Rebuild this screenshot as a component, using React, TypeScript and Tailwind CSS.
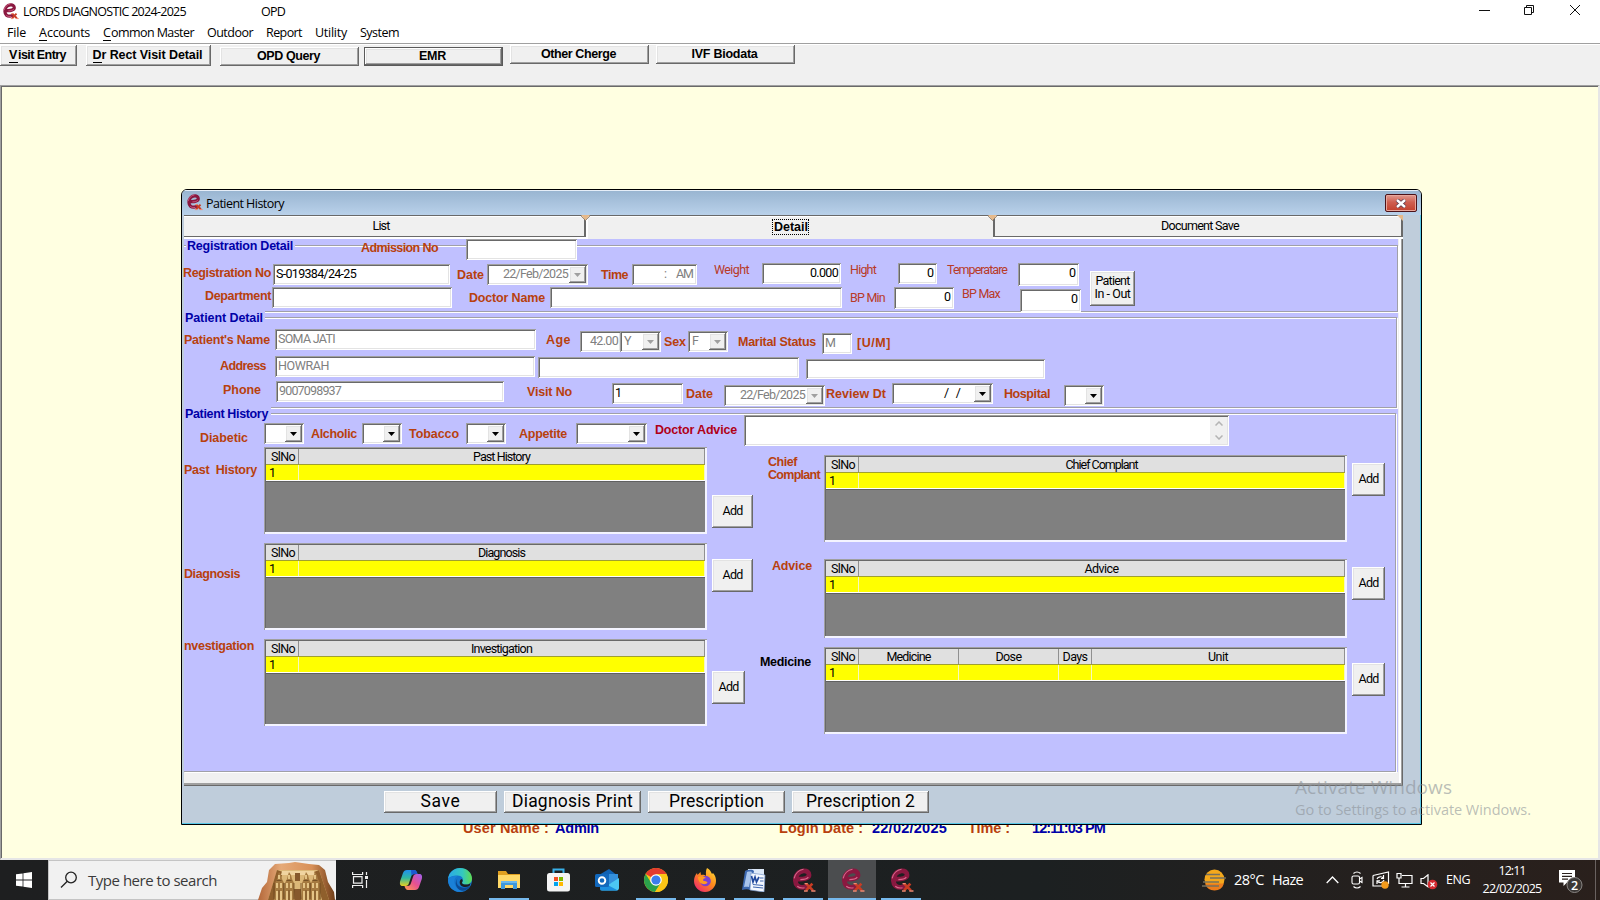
import { useLayoutEffect, useRef, useState, type ReactNode } from "react";
import clsx from "clsx";

const SUNKEN =
  "bg-white shadow-[inset_1px_1px_0_#a0a0a0,inset_-1px_-1px_0_#ffffff,inset_2px_2px_0_#696969,inset_-2px_-2px_0_#e3e3e3]";
const RAISED =
  "bg-[#f0f0f0] shadow-[inset_-1px_-1px_0_#696969,inset_1px_1px_0_#ffffff,inset_-2px_-2px_0_#a0a0a0,inset_2px_2px_0_#e3e3e3]";
const SANS = "font-['Liberation_Sans',Arial,sans-serif]";
const NARROW = "font-['Roboto','Liberation_Sans',sans-serif]";
const SEGOE = "font-['Open_Sans','Noto_Sans',sans-serif]";

/* One line of text whose tracking is tuned so that it fills the width of its box. */
function Cap({ className, children }: { className?: string; children: string }) {
  const box = useRef<HTMLSpanElement>(null);
  const text = useRef<HTMLSpanElement>(null);
  const [spacing, setSpacing] = useState(0);
  useLayoutEffect(() => {
    if (!box.current || !text.current) return;
    const free = box.current.getBoundingClientRect().width - text.current.getBoundingClientRect().width;
    setSpacing(free / children.length);
  }, [children]);
  return (
    <span ref={box} className={clsx("block h-[14px] shrink-0 whitespace-pre leading-[14px]", className)}>
      <span ref={text} className="inline-block" style={{ letterSpacing: spacing }}>
        {children}
      </span>
    </span>
  );
}

const Label = ({ className, children }: { className: string; children: string }) => (
  <Cap className={clsx("text-[12.5px] font-bold text-[#b8400e]", SANS, className)}>{children}</Cap>
);
const Thin = ({ className, children }: { className: string; children: string }) => (
  <Cap className={clsx("text-[12.5px] text-[#b83a28]", className)}>{children}</Cap>
);
const Legend = ({ className, children }: { className: string; children: string }) => (
  <Cap className={clsx("text-[12.5px] font-bold text-[#0000a8]", SANS, className)}>{children}</Cap>
);

function Field({ className, children }: { className: string; children?: ReactNode }) {
  return (
    <div className={clsx("flex shrink-0 items-start px-[3px] pt-[3px] text-[12.5px]", SUNKEN, className)}>{children}</div>
  );
}

function Combo({ className, disabled, children }: { className: string; disabled?: boolean; children?: ReactNode }) {
  return (
    <div className={clsx("flex h-[21px] shrink-0 justify-end p-[2px] text-[12.5px]", SUNKEN, className)}>
      {children}
      <div className={clsx("flex h-[17px] w-[17px] shrink-0 items-center justify-center", RAISED)}>
        <svg width="7" height="4" viewBox="0 0 7 4" className={disabled ? "fill-[#a0a0a0]" : "fill-black"}>
          <path d="M0 0h7L3.5 4z" />
        </svg>
      </div>
    </div>
  );
}

function PushButton({ className, children }: { className: string; children: ReactNode }) {
  return (
    <button className={clsx("flex shrink-0 flex-col items-center justify-center pb-[2px]", RAISED, className)}>
      {children}
    </button>
  );
}

type Column = { title: string; cell: string; text: string };

function DataGrid({ className, columns }: { className: string; columns: Column[] }) {
  return (
    <div
      className={clsx(
        "flex shrink-0 flex-col bg-[#808080] p-[2px] text-[12.5px] text-black shadow-[inset_1px_1px_0_#a0a0a0,inset_-2px_-2px_0_#f4f4ff,inset_2px_2px_0_#696969]",
        className,
      )}
    >
      <div className="flex h-[16px] shrink-0 border-b border-[#a0a030] bg-[#e0e0e0]">
        {columns.map((c) => (
          <div key={c.title} className={clsx("flex justify-center border-r border-[#909090]", c.cell)}>
            <Cap className={c.text}>{c.title}</Cap>
          </div>
        ))}
      </div>
      <div className="flex h-[16px] shrink-0 border-b border-white bg-[#ffff00] shadow-[0_1px_0_#606060]">
        {columns.map((c, i) => (
          <div key={c.title} className={clsx("border-r border-[#f6f6c0] pl-[3px] leading-[15px]", c.cell)}>
            {i === 0 ? "1" : ""}
          </div>
        ))}
      </div>
    </div>
  );
}

const slNo: Column = { title: "SlNo", cell: "w-[33px] shrink-0", text: "w-[24px] ml-[2px] mt-[1px]" };
const wide = (title: string, text: string): Column[] => [slNo, { title, cell: "flex-1", text }];

const AddButton = ({ className }: { className: string }) => (
  <PushButton className={clsx("h-[33px] text-[12.5px]", className)}>
    <Cap className="w-[20px]">Add</Cap>
  </PushButton>
);

function ELogo({ className }: { className: string }) {
  return (
    <svg viewBox="0 0 24 24" className={className}>
      <path
        d="M6 10.600c5.500.4 11.300-.6 11.300-3.800 0-3-2.300-4.300-5.300-4C7.300 3.200 4 7.200 4.200 12.200c.2 4.400 3.200 6.800 7.200 6.400 2.200-.2 4-1.200 5-2.400"
        fill="none"
        stroke="#8a1840"
        strokeWidth="4.600"
      />
      <path
        d="M3 10C4 5.500 7.500 1.800 12 1.200M9 11.200c3.500 0 6.500-.8 7.600-2.400M6 17.500c2 1.600 4.500 2 7 1.500"
        fill="none"
        stroke="#d8688c"
        strokeWidth="1.100"
      />
      <path d="M14.500 15l6.500 6.500M20.500 15L14.500 21.500" stroke="#c83c24" strokeWidth="2.600" />
      <path d="M19.500 22h4M12.500 22h3.500M13 15h3" stroke="#f08870" strokeWidth="1.400" />
    </svg>
  );
}

function Bevel({ className }: { className: string }) {
  return (
    <svg width="9" height="6" viewBox="0 0 9 6" className={className}>
      <path d="M0 0h9L4.500 5.500z" fill="#e6b98a" />
      <path d="M0 1l4.500 4.500L9 1" fill="none" stroke="#8a7a68" strokeWidth=".8" />
    </svg>
  );
}

function TopBars() {
  return (
    <>
      <header className={clsx("flex h-[22px] items-start bg-white text-[12.5px] text-black", SEGOE)}>
        <ELogo className="ml-[2px] mt-[3px] h-[17px] w-[17px]" />
        <Cap className="ml-[4px] mt-[5px] w-[163px]">LORDS DIAGNOSTIC 2024-2025</Cap>
        <Cap className="ml-[75px] mt-[5px] w-[24px]">OPD</Cap>
        <svg width="120" height="20" viewBox="0 0 120 20" className="ml-auto mr-[10px]" fill="none" stroke="#111">
          <path d="M9 10.500h11M54.500 7.500h7v7h-7zM56.500 7.500v-2h7v7h-2M100 5l10 10M110 5l-10 10" />
        </svg>
      </header>
      <nav className={clsx("flex h-[21px] items-start bg-white text-[12.5px] text-black", SEGOE)}>
        <Cap className="ml-[7px] mt-[4px] w-[19px]">File</Cap>
        <div className="ml-[13px] mt-[4px] flex">
          <Cap className="w-[8px] [&>span]:border-b [&>span]:border-black">A</Cap>
          <Cap className="w-[43px]">ccounts</Cap>
        </div>
        <div className="ml-[13px] mt-[4px] flex">
          <Cap className="w-[8px] [&>span]:border-b [&>span]:border-black">C</Cap>
          <Cap className="w-[83px]">ommon Master</Cap>
        </div>
        <Cap className="ml-[13px] mt-[4px] w-[46px]">Outdoor</Cap>
        <Cap className="ml-[13px] mt-[4px] w-[36px]">Report</Cap>
        <Cap className="ml-[13px] mt-[4px] w-[32px]">Utility</Cap>
        <Cap className="ml-[13px] mt-[4px] w-[39px]">System</Cap>
      </nav>
      <div
        className={clsx(
          "flex h-[42px] items-start border-t border-[#a0a0a0] bg-[#f0f0f0] text-[12.5px] font-bold text-black shadow-[inset_0_1px_0_#fff]",
          SANS,
        )}
      >
        <PushButton className="mt-[1px] h-[21px] w-[77px]">
          <div className="mr-[2px] flex">
            <Cap className="w-[9px] [&>span]:border-b [&>span]:border-black">V</Cap>
            <Cap className="w-[48px]">isit Entry</Cap>
          </div>
        </PushButton>
        <PushButton className="ml-[9px] mt-[1px] h-[21px] w-[125px]">
          <div className="mr-[2px] flex">
            <Cap className="w-[9px] [&>span]:border-b [&>span]:border-black">D</Cap>
            <Cap className="w-[101px]">r Rect Visit Detail</Cap>
          </div>
        </PushButton>
        <PushButton className="ml-[9px] mt-[3px] h-[19px] w-[139px]">
          <Cap className="mr-[2px] w-[63px]">OPD Query</Cap>
        </PushButton>
        <div className="ml-[5px] mt-[3px] h-[19px] border border-[#5a5a5a]">
          <PushButton className="h-[17px] w-[137px]">
            <Cap className="mr-[2px] w-[27px]">EMR</Cap>
          </PushButton>
        </div>
        <PushButton className="ml-[7px] mt-[1px] h-[19px] w-[139px]">
          <Cap className="mr-[2px] w-[75px]">Other Cherge</Cap>
        </PushButton>
        <PushButton className="ml-[7px] mt-[1px] h-[19px] w-[139px]">
          <Cap className="mr-[2px] w-[66px]">IVF Biodata</Cap>
        </PushButton>
      </div>
    </>
  );
}

const GROUP =
  "flex shrink-0 flex-col border border-l-0 border-[#a0a0a8] shadow-[1px_1px_0_#fff,inset_0_1px_0_#fff]";

function RegistrationGroup() {
  return (
    <section className={clsx("mt-[6px] h-[67px] w-[1214px]", GROUP)}>
      <div className="flex h-[17px] items-start">
        <div className="ml-[2px] mt-[-7px] bg-[#c0c0ff] pl-px pr-[2px]">
          <Legend className="w-[106px]">Registration Detail</Legend>
        </div>
        <Label className="ml-[66px] mt-[-5px] w-[77px]">Admission No</Label>
        <Field className="ml-[28px] mt-[-7px] h-[21px] w-[111px]" />
      </div>
      <div className="flex h-[24px] items-start">
        <Label className="ml-[-1px] mt-[3px] w-[88px]">Registration No</Label>
        <Field className="ml-[2px] mt-px h-[21px] w-[177px] text-black">
          <Cap className="w-[80px]">S-019384/24-25</Cap>
        </Field>
        <Label className="ml-[7px] mt-[5px] w-[27px]">Date</Label>
        <Combo disabled className="ml-[3px] mt-px w-[101px] text-[#808080]">
          <Cap className="mr-px mt-px w-[65px]">22/Feb/2025</Cap>
        </Combo>
        <Label className="ml-[13px] mt-[5px] w-[27px]">Time</Label>
        <Field className="ml-[4px] mt-px h-[21px] w-[65px] justify-end text-[#808080]">
          <Cap className="mr-[9px] w-[3px]">:</Cap>
          <Cap className="mr-px w-[17px]">AM</Cap>
        </Field>
        <Thin className="ml-[17px] w-[35px]">Weight</Thin>
        <Field className="ml-[13px] h-[21px] w-[79px] justify-end text-black">
          <Cap className="w-[28px]">0.000</Cap>
        </Field>
        <Thin className="ml-[9px] w-[26px]">Hight</Thin>
        <Field className="ml-[22px] h-[21px] w-[39px] justify-end text-black">
          <Cap className="w-[7px]">0</Cap>
        </Field>
        <Thin className="ml-[10px] w-[60px]">Temperatare</Thin>
        <Field className="ml-[11px] h-[23px] w-[61px] justify-end text-black">
          <Cap className="w-[7px]">0</Cap>
        </Field>
        <PushButton className="ml-[11px] mt-[8px] h-[35px] w-[45px] text-[12.5px] text-black">
          <Cap className="w-[34px]">Patient</Cap>
          <Cap className="mt-[-1px] w-[36px]">In - Out</Cap>
        </PushButton>
      </div>
      <div className="flex h-[24px] items-start">
        <Label className="ml-[21px] mt-[2px] w-[66px]">Department</Label>
        <Field className="ml-px h-[21px] w-[180px]" />
        <Label className="ml-[17px] mt-[4px] w-[76px]">Doctor Name</Label>
        <Field className="ml-[5px] h-[21px] w-[292px]" />
        <Thin className="ml-[8px] mt-[4px] w-[35px]">BP Min</Thin>
        <Field className="ml-[9px] h-[22px] w-[60px] justify-end text-black">
          <Cap className="w-[7px]">0</Cap>
        </Field>
        <Thin className="ml-[8px] w-[38px]">BP Max</Thin>
        <Field className="ml-[20px] mt-[2px] h-[23px] w-[61px] justify-end text-black">
          <Cap className="w-[7px]">0</Cap>
        </Field>
      </div>
    </section>
  );
}

function PatientGroup() {
  return (
    <section className={clsx("mt-[5px] h-[91px] w-[1213px]", GROUP)}>
      <div className="flex h-[11px] items-start">
        <div className="mt-[-7px] bg-[#c0c0ff] pl-px pr-[2px]">
          <Legend className="w-[78px]">Patient Detail</Legend>
        </div>
      </div>
      <div className="flex h-[27px] items-start">
        <Label className="mt-[4px] w-[86px]">Patient's Name</Label>
        <Field className="ml-[5px] h-[21px] w-[261px] pt-[2px] text-[#808080]">
          <Cap className="w-[57px]">SOMA JATI</Cap>
        </Field>
        <Label className="ml-[10px] mt-[4px] w-[25px]">Age</Label>
        <Field className="ml-[9px] mt-[2px] h-[21px] w-[41px] justify-end text-[#808080]">
          <Cap className="w-[28px]">42.00</Cap>
        </Field>
        <Combo disabled className="ml-[-1px] mt-[2px] w-[41px] text-[#808080]">
          <Cap className="mr-auto ml-[2px] mt-px w-[8px]">Y</Cap>
        </Combo>
        <Label className="ml-[3px] mt-[6px] w-[22px]">Sex</Label>
        <Combo disabled className="ml-[2px] mt-[2px] w-[40px] text-[#808080]">
          <Cap className="mr-auto ml-[2px] mt-px w-[7px]">F</Cap>
        </Combo>
        <Label className="ml-[10px] mt-[6px] w-[78px]">Marital Status</Label>
        <Field className="ml-[6px] mt-[4px] h-[21px] w-[30px] text-[#808080]">
          <Cap className="w-[9px]">M</Cap>
        </Field>
        <Label className="ml-[5px] mt-[7px] w-[34px]">[U/M]</Label>
      </div>
      <div className="flex h-[25px] items-start">
        <Label className="ml-[36px] mt-[3px] w-[46px]">Address</Label>
        <Field className="ml-[9px] h-[21px] w-[260px] pt-[2px] text-[#808080]">
          <Cap className="w-[51px]">HOWRAH</Cap>
        </Field>
        <Field className="ml-[3px] mt-px h-[21px] w-[261px]" />
        <Field className="ml-[7px] mt-[3px] h-[20px] w-[239px]" />
      </div>
      <div className="flex h-[24px] items-start">
        <Label className="ml-[39px] mt-[2px] w-[38px]">Phone</Label>
        <Field className="ml-[15px] h-[21px] w-[228px] pt-[2px] text-[#808080]">
          <Cap className="w-[62px]">9007098937</Cap>
        </Field>
        <Label className="ml-[23px] mt-[4px] w-[45px]">Visit No</Label>
        <Field className="ml-[40px] mt-[2px] h-[21px] w-[71px] text-black">
          <Cap className="w-[7px]">1</Cap>
        </Field>
        <Label className="ml-[3px] mt-[6px] w-[27px]">Date</Label>
        <Combo disabled className="ml-[11px] mt-[4px] w-[101px] text-[#808080]">
          <Cap className="mr-px mt-px w-[65px]">22/Feb/2025</Cap>
        </Combo>
        <Label className="ml-px mt-[6px] w-[60px]">Review Dt</Label>
        <Combo className="ml-[6px] mt-[2px] w-[101px] text-black">
          <Cap className="mr-[13px] mt-px w-[17px]">/  /</Cap>
        </Combo>
        <Label className="ml-[11px] mt-[6px] w-[46px]">Hospital</Label>
        <Combo className="ml-[14px] mt-[4px] w-[40px]" />
      </div>
    </section>
  );
}

function HistoryGroup() {
  return (
    <section className={clsx("mt-[5px] h-[359px] w-[1212px]", GROUP)}>
      <div className="flex h-[9px] items-start">
        <div className="mt-[-7px] bg-[#c0c0ff] pl-px pr-[3px]">
          <Legend className="w-[83px]">Patient History</Legend>
        </div>
      </div>
      <div className="flex h-[24px] items-start">
        <Label className="ml-[16px] mt-[8px] w-[48px]">Diabetic</Label>
        <Combo className="ml-[16px] w-[40px]" />
        <Label className="ml-[7px] mt-[4px] w-[46px]">Alcholic</Label>
        <Combo className="ml-[5px] w-[40px]" />
        <Label className="ml-[7px] mt-[4px] w-[50px]">Tobacco</Label>
        <Combo className="ml-[7px] w-[40px]" />
        <Label className="ml-[13px] mt-[4px] w-[48px]">Appetite</Label>
        <Combo className="ml-[9px] w-[71px]" />
        <Cap className={clsx("ml-[8px] w-[82px] text-[12.5px] font-bold text-[#b00018]", SANS)}>Doctor Advice</Cap>
        <div className={clsx("ml-[7px] mt-[-8px] flex h-[31px] w-[485px] shrink-0 justify-end p-[2px]", SUNKEN)}>
          <div className="flex w-[17px] flex-col items-center justify-between bg-[#f0f0f0] py-[4px]">
            <svg width="8" height="5" viewBox="0 0 8 5" fill="none" stroke="#b4b4b4" strokeWidth="1.500">
              <path d="M.5 4.500L4 1l3.500 3.500" />
            </svg>
            <svg width="8" height="5" viewBox="0 0 8 5" fill="none" stroke="#b4b4b4" strokeWidth="1.500">
              <path d="M.5.500L4 4 7.500.500" />
            </svg>
          </div>
        </div>
      </div>
      <div className="flex items-start">
        <div className="flex w-[570px] shrink-0 flex-col">
          <div className="flex h-[96px] items-start">
            <Label className="mr-[7px] mt-[16px] w-[73px]">Past  History</Label>
            <DataGrid className="h-[87px] w-[443px]" columns={wide("Past History", "mt-[1px] w-[57px]")} />
            <AddButton className="ml-[5px] mt-[48px] w-[41px]" />
          </div>
          <div className="flex h-[96px] items-start">
            <Label className="mr-[24px] mt-[24px] w-[56px]">Diagnosis</Label>
            <DataGrid className="h-[87px] w-[443px]" columns={wide("Diagnosis", "mt-[1px] w-[47px]")} />
            <AddButton className="ml-[5px] mt-[16px] w-[41px]" />
          </div>
          <div className="flex h-[96px] items-start">
            <Label className="mr-[10px] w-[70px]">nvestigation</Label>
            <DataGrid className="h-[87px] w-[443px]" columns={wide("Investigation", "mt-[1px] w-[61px]")} />
            <AddButton className="ml-[5px] mt-[32px] w-[33px]" />
          </div>
        </div>
        <div className="flex flex-col pt-[8px]">
          <div className="flex h-[104px] items-start">
            <div className="w-[70px] shrink-0 pl-[14px]">
              <Label className="w-[29px]">Chief</Label>
              <Label className="mt-[-1px] w-[52px]">Complant</Label>
            </div>
            <DataGrid className="h-[87px] w-[523px]" columns={wide("Chief Complant", "mt-[1px] w-[72px]")} />
            <AddButton className="ml-[5px] mt-[8px] w-[33px]" />
          </div>
          <div className="flex h-[88px] items-start">
            <div className="w-[70px] shrink-0 pl-[18px]">
              <Label className="w-[40px]">Advice</Label>
            </div>
            <DataGrid className="h-[79px] w-[523px]" columns={wide("Advice", "mt-[1px] w-[34px]")} />
            <AddButton className="ml-[5px] mt-[8px] w-[33px]" />
          </div>
          <div className="flex items-start">
            <div className="w-[70px] shrink-0 pl-[6px] pt-[8px]">
              <Cap className={clsx("w-[51px] text-[12.5px] font-bold text-black", SANS)}>Medicine</Cap>
            </div>
            <DataGrid
              className="h-[87px] w-[523px]"
              columns={[
                slNo,
                { title: "Medicine", cell: "w-[100px] shrink-0", text: "mt-[1px] w-[44px]" },
                { title: "Dose", cell: "w-[100px] shrink-0", text: "mt-[1px] w-[26px]" },
                { title: "Days", cell: "w-[33px] shrink-0", text: "mt-[1px] w-[25px]" },
                { title: "Unit", cell: "flex-1", text: "mt-[1px] w-[20px]" },
              ]}
            />
            <AddButton className="ml-[5px] mt-[16px] w-[33px]" />
          </div>
        </div>
      </div>
    </section>
  );
}

function PatientWindow() {
  return (
    <div
      className={clsx(
        "absolute left-[181px] top-[189px] flex h-[636px] w-[1241px] flex-col overflow-hidden rounded-t-[6px] border border-black bg-[#bfcddb] text-black",
        NARROW,
      )}
    >
      <div className="flex h-[25px] shrink-0 items-start bg-linear-to-b from-[#98b4d0] to-[#b9d1ea] shadow-[inset_0_1px_0_#e6eef8]">
        <ELogo className="ml-[4px] mt-[4px] h-[17px] w-[17px]" />
        <Cap className={clsx("ml-[3px] mt-[7px] w-[78px] text-[12.5px]", SEGOE)}>Patient History</Cap>
        <div className="ml-auto mr-[4px] mt-[4px] flex h-[18px] w-[32px] items-center justify-center rounded-[2px] border border-[#4c1218] bg-linear-to-b from-[#e09a90] via-[#cf5f50] via-45% to-[#c2402c] shadow-[inset_0_0_0_1px_#e8a79c]">
          <svg width="12" height="9" viewBox="0 0 12 9">
            <path d="M2 1l8 7M10 1L2 8" stroke="#5b3a4a" strokeWidth="4" />
            <path d="M2 1l8 7M10 1L2 8" stroke="#fff" strokeWidth="2.400" />
          </svg>
        </div>
      </div>
      <div className="ml-[2px] flex w-[1219px] flex-1 flex-col">
        <div className="flex h-[24px] shrink-0 border-t border-[#696969] bg-[#f0f0f0] text-[12.5px]">
          <div className="flex h-[21px] w-[402px] justify-center border-b border-r-2 border-[#696969] shadow-[inset_0_1px_0_#fff,0_2px_0_#fff]">
            <Cap className="ml-[-6px] mt-[3px] w-[17px]">List</Cap>
          </div>
          <div className="relative flex h-[23px] w-[407px] justify-center shadow-[inset_2px_1px_0_#fff]">
            <Bevel className="absolute -left-[5px] -top-px" />
            <div className="ml-[2px] mt-[3px] flex h-[16px] w-[37px] items-center border border-dotted border-black pl-px font-bold">
              <Cap className={clsx("w-[34px]", SANS)}>Detail</Cap>
            </div>
            <Bevel className="absolute -right-[4px] -top-px z-10" />
          </div>
          <div className="relative flex h-[21px] w-[410px] justify-center border-b border-l-2 border-r-2 border-[#696969] shadow-[inset_0_1px_0_#fff,0_2px_0_#fff]">
            <Cap className="ml-[4px] mt-[3px] w-[78px]">Document Save</Cap>
            <svg width="6" height="6" viewBox="0 0 6 6" className="absolute -right-[2px] -top-px">
              <path d="M0 0h6v6z" fill="#e6b98a" />
            </svg>
          </div>
        </div>
        <div className="h-[547px] shrink-0 bg-[#f0f0f0] shadow-[inset_-1px_-1px_0_#696969,inset_-2px_-3px_0_#a0a0a0,inset_-4px_0_0_#fff]">
          <div className="flex h-[533px] w-[1214px] flex-col bg-[#c0c0ff]">
            <RegistrationGroup />
            <PatientGroup />
            <HistoryGroup />
          </div>
        </div>
        <div className="flex items-start gap-[7px] pl-[200px] pt-[5px] text-[17.500px]">
          <PushButton className="h-[22px] w-[113px]">
            <Cap className="w-[40px]">Save</Cap>
          </PushButton>
          <PushButton className="h-[22px] w-[137px]">
            <Cap className="w-[121px]">Diagnosis Print</Cap>
          </PushButton>
          <PushButton className="h-[22px] w-[137px]">
            <Cap className="w-[95px]">Prescription</Cap>
          </PushButton>
          <PushButton className="h-[22px] w-[137px]">
            <Cap className="w-[109px]">Prescription 2</Cap>
          </PushButton>
        </div>
      </div>
      <div className="pointer-events-none absolute inset-0 top-[25px] border-b border-r border-[#58c8e8]" />
    </div>
  );
}

function TaskItem({ state, children }: { state?: "open" | "active"; children: ReactNode }) {
  return (
    <div className={clsx("flex h-[40px] w-[48px] shrink-0 flex-col items-center", state === "active" && "bg-[#4b4d4f]")}>
      <div className="flex h-[38px] items-center justify-center pt-[2px]">{children}</div>
      {state && <div className={clsx("h-[2px] bg-[#76b9ed]", state === "active" ? "w-[48px]" : "w-[40px]")} />}
    </div>
  );
}

function SearchArt() {
  return (
    <svg width="78" height="38" viewBox="0 0 78 38" className="ml-auto mt-[2px]">
      <defs>
        <linearGradient id="rock" x1="0" x2="1">
          <stop offset="0" stopColor="#b4683a" />
          <stop offset=".3" stopColor="#e6aa78" />
          <stop offset=".7" stopColor="#d89058" />
          <stop offset="1" stopColor="#6e3d18" />
        </linearGradient>
      </defs>
      <path d="M0 38l4-12 5-6 2-12 6-6 14-1 6-1 14 2 10 1 6 5 3 12 6 10 1 8z" fill="url(#rock)" />
      <path d="M19 8h42l10 30H10z" fill="#dcb878" />
      <path d="M19 8l-9 30h6l9-28zM61 8l10 30h-7L56 10z" fill="#8f5f2c" />
      <path d="M24 9h32l1 4H23z" fill="#f0d4a0" />
      <path d="M37 11h5v8h-5zM36 27h7v11h-7z" fill="#86592c" />
      {[21, 31, 48, 57].map((x) => (
        <g key={x} transform={`translate(${x} 11)`}>
          <path d="M0-1l2 3 1 4 2 4v8l1 10h-11l1-10v-8l2-4 1-4z" fill="#a57a40" />
          <path d="M-1 2h2v4h-2zM-3 10h2v5h-2zM1 10h2v5H1zM-3 18h2v9h-2zM1 18h2v9H1z" fill="#e4c486" />
          <path d="M-5 10v16M5 10v16M0 17v10M-2.500 7.500h5" stroke="#6b4720" strokeWidth=".8" />
        </g>
      ))}
    </svg>
  );
}

function Taskbar() {
  return (
    <footer className={clsx("flex h-[40px] w-full bg-linear-to-r from-[#1e1f20] via-[#1c2021] via-65% to-[#2a201c] text-white", SEGOE)}>
      <div className="flex w-[48px] items-center justify-center">
        <svg width="16" height="16" viewBox="0 0 16 16" fill="#fff">
          <path d="M0 2.300l6.600-.9v6.200H0zM7.400 1.300L16 0v7.600H7.400zM0 8.400h6.600v6.200L0 13.700zM7.400 8.400H16V16l-8.600-1.300z" />
        </svg>
      </div>
      <div className="flex w-[288px] items-center border border-r-0 border-[#c4c4c4] bg-[#f1f1f1]">
        <svg width="18" height="18" viewBox="0 0 18 18" fill="none" stroke="#222" strokeWidth="1.300" className="ml-[11px]">
          <circle cx="11" cy="6.500" r="5.300" />
          <path d="M7.300 10.200L1 16.500" />
        </svg>
        <Cap className="ml-[10px] w-[129px] text-[15px] text-[#3a3a3a]">Type here to search</Cap>
        <SearchArt />
      </div>
      <TaskItem>
        <svg width="17" height="16" viewBox="0 0 17 16" fill="none" stroke="#eee" strokeWidth="1.200">
          <path d="M.6 0v2.500h10V0M.6 16v-2.500h10V16M1.500 4.600h8.500v6.600H1.500zM14.500 0v3M14.500 8v8" />
          <path d="M13 4h3v3h-3z" fill="#eee" stroke="none" />
        </svg>
      </TaskItem>
      <div className="ml-[3px] flex gap-px">
        <TaskItem>
          <svg width="24" height="24" viewBox="0 0 24 24">
            <defs>
              <linearGradient id="cpa" x1="0" y1="0" x2="0" y2="1">
                <stop offset="0" stopColor="#1f8ff0" />
                <stop offset=".5" stopColor="#30b8a0" />
                <stop offset="1" stopColor="#e8d020" />
              </linearGradient>
              <linearGradient id="cpb" x1="1" y1="0" x2="0" y2="1">
                <stop offset="0" stopColor="#a060f0" />
                <stop offset=".5" stopColor="#e85090" />
                <stop offset="1" stopColor="#ffa050" />
              </linearGradient>
            </defs>
            <path d="M8 2h7c2 0 3 2 3.500 4h-3c-2 0-3 1-3.500 3l-2 6c-.5 2-1.500 3-3.500 3H4c-3 0-3.500-2-2.800-5L4 5c.7-2 2-3 4-3z" fill="url(#cpa)" />
            <path d="M12 2h3c2 0 3 2 3.500 4h-3c-2 0-2.500 1-3 2z" fill="#1c58d0" />
            <path d="M16 22H9c-2 0-3-2-3.500-4h3c2 0 3-1 3.500-3l2-6c.5-2 1.500-3 3.500-3H20c3 0 3.500 2 2.800 5L20 19c-.7 2-2 3-4 3z" fill="url(#cpb)" />
          </svg>
        </TaskItem>
        <TaskItem>
          <svg width="24" height="24" viewBox="0 0 24 24">
            <defs>
              <linearGradient id="eda" x1="0" x2="1">
                <stop offset="0" stopColor="#2aa8e8" />
                <stop offset=".6" stopColor="#34c8c0" />
                <stop offset="1" stopColor="#60dc50" />
              </linearGradient>
            </defs>
            <circle cx="12" cy="12" r="12" fill="#1474cc" />
            <path d="M0 11C1 4 6 0 12 0c7 0 12 5 12 10.500 0 4-3 6-6 6-4 0-4.500-1.500-3.500-3C16 11 14 7.500 9.500 7.500 5 7.500 1 9 0 11z" fill="url(#eda)" />
            <path d="M9.500 8C6 10 5.500 14 7.500 18c2 3.500 6.500 5 10 4-3 2-7 2.500-10 1C2 21 0 16 0 11.500 2 8.500 6 7.500 9.500 8z" fill="#1a80d8" />
            <path d="M9.500 10.500c-2 3-.5 7 3 8.500 3.500 1.500 7 .5 9.500-1-2 4-6 5.500-9 4.500C8 21 6 14 9.500 10.500z" fill="#0c4a94" />
            <path d="M14.500 13.500c-1 1.500-.5 3 3.500 3 2 0 3.500-.5 4.500-1.500l-1 3c-3 1.500-7 1.500-9-1-1.500-2-1-5 1-6 1 .5 1.500 1.500 1 2.500z" fill="#1c2021" />
          </svg>
        </TaskItem>
        <TaskItem state="open">
          <svg width="22" height="20" viewBox="0 0 22 20">
            <path d="M0 1h8l2 3h12v14H0z" fill="#e0a020" />
            <path d="M0 5h22v13H0z" fill="#ffd968" />
            <path d="M3 11h16v8h-4v-4H7v4H3z" fill="#3d98dc" />
            <path d="M3 11h16v2H3z" fill="#68b8ee" />
          </svg>
        </TaskItem>
        <TaskItem>
          <svg width="23" height="24" viewBox="0 0 23 24">
            <path d="M6.500 6V1.500h10V6" fill="none" stroke="#38b0e8" strokeWidth="2" />
            <rect x="0" y="5" width="23" height="18.500" rx="2.500" fill="#f4f4f4" />
            <path d="M7 9h4v4H7z" fill="#f25022" />
            <path d="M12 9h4v4h-4z" fill="#7fba00" />
            <path d="M7 14h4v4H7z" fill="#00a4ef" />
            <path d="M12 14h4v4h-4z" fill="#ffb900" />
          </svg>
        </TaskItem>
        <TaskItem>
          <svg width="24" height="24" viewBox="0 0 24 24">
            <path d="M4 7l10-6 9 7v10H4z" fill="#0f62b4" />
            <path d="M14 6h9v8l-9 2z" fill="#3490dc" />
            <path d="M5 22l19-12v10c0 1.500-1 2.500-2.500 2.500H7z" fill="#4cc8f4" />
            <path d="M5 13l18 9.500H7c-1.500 0-2-1-2-2z" fill="#1b8fe0" />
            <rect x="0" y="6" width="14" height="13" rx="1.500" fill="#1268bc" />
            <circle cx="7" cy="12.500" r="3.300" fill="none" stroke="#fff" strokeWidth="1.900" />
          </svg>
        </TaskItem>
        <TaskItem state="open">
          <svg width="24" height="24" viewBox="0 0 24 24">
            <circle cx="12" cy="12" r="12" fill="#fbc516" />
            <path d="M12 12L1.600 6A12 12 0 0 1 22.400 6z" fill="#e33b2e" />
            <path d="M1.600 6A12 12 0 0 0 11 23.950L17 14.500 7 14.500z" fill="#2aa14b" />
            <path d="M12 6h10.400A12 12 0 0 1 11 23.950L17.200 14.500z" fill="#fbc516" />
            <circle cx="12" cy="12" r="5.800" fill="#fff" />
            <circle cx="12" cy="12" r="4.600" fill="#3b7ded" />
          </svg>
        </TaskItem>
        <TaskItem state="open">
          <svg width="24" height="24" viewBox="0 0 24 24">
            <defs>
              <linearGradient id="ffx" x1="1" y1="0" x2=".2" y2="1">
                <stop offset="0" stopColor="#ffe83c" />
                <stop offset=".5" stopColor="#ff8a1c" />
                <stop offset="1" stopColor="#f0286c" />
              </linearGradient>
            </defs>
            <path d="M14 0c3 1.500 4 4 5 6l1-1c2.500 3 3 5 3 8 0 6-5 11-11 11S1 19 1 13c0-3 1-6 3-8l.5 2 3-3 .5 3c2-.5 4 0 5 1 0-3-.5-5 1-8z" fill="url(#ffx)" />
            <circle cx="12.500" cy="13" r="5.300" fill="#7b3fd0" />
            <path d="M5 9c3-1.500 6-1 8 1-2 0-3 1-3 2.500 1.500 1 4 .5 4.500 2-1.500 2.500-6 2-8-.5C5.500 12.500 5 11 5 9z" fill="#ff9a20" />
          </svg>
        </TaskItem>
        <TaskItem state="open">
          <svg width="24" height="23" viewBox="0 0 24 23">
            <path d="M6 0h16v20H3z" fill="#dce8f8" />
            <path d="M3 2C8 0 11 1 12 2L8 21c-2-1-5-1-8 0z" fill="#3c68b0" />
            <path d="M5 3c2-.6 4-.5 5 0L7 18c-2-.5-3-.5-5 0z" fill="#a8c4ec" />
            <path d="M9 4l14 2-1 17-14-2z" fill="#f4f8ff" stroke="#7898c8" strokeWidth=".7" />
            <path d="M9.500 7l1.500 6 2-5 1.500 5L17 8" fill="none" stroke="#20489c" strokeWidth="1.700" />
            <path d="M18 9h3.500M18 12h3.500M11 15.500l10 1M11 18l10 1" stroke="#4068b0" strokeWidth="1.200" />
          </svg>
        </TaskItem>
        <TaskItem state="open">
          <ELogo className="h-[25px] w-[25px]" />
        </TaskItem>
        <TaskItem state="active">
          <ELogo className="h-[25px] w-[25px]" />
        </TaskItem>
        <TaskItem state="open">
          <ELogo className="h-[25px] w-[25px]" />
        </TaskItem>
      </div>
      <div className="ml-[277px] flex flex-1 items-center">
        <svg width="24" height="22" viewBox="0 0 24 22" className="shrink-0">
          <circle cx="12.500" cy="10.500" r="10" fill="#f4a81c" />
          <path d="M3 14.500a10 10 0 0 0 19 0z" fill="#ec7c1c" />
          <path d="M4 5.500h14M8 9h16M1 13h16M0 17h17" stroke="#76705e" strokeWidth="1.600" />
        </svg>
        <Cap className="ml-[8px] w-[30px] text-[14.5px]">28°C</Cap>
        <Cap className="ml-[8px] w-[31px] text-[14.5px]">Haze</Cap>
        <svg width="13" height="8" viewBox="0 0 13 8" fill="none" stroke="#fff" strokeWidth="1.300" className="ml-[23px] shrink-0">
          <path d="M.7 7l5.800-6 5.800 6" />
        </svg>
        <svg width="12" height="18" viewBox="0 0 12 18" fill="none" stroke="#fff" strokeWidth="1.100" className="ml-[12px] shrink-0">
          <path d="M2.500 2.500C4.500.5 7.500.5 9.500 2.500M2.500 15.500c2 2 5 2 7 0" />
          <rect x="1" y="5" width="7.500" height="8" rx="1.500" />
          <path d="M8.500 8l2.500-1.500v5L8.500 10" />
        </svg>
        <svg width="18" height="18" viewBox="0 0 18 18" fill="none" stroke="#fff" strokeWidth="1.200" className="ml-[9px] shrink-0">
          <path d="M1 4.500L16.500 1v12M1 4.500V15h9" />
          <path d="M5 8c1-2.500 5-3 6-1M11.500 4v3.500H9M12 9c-1 3-5 3.500-6.500 1.500M5 13V9.800h3" />
          <circle cx="13" cy="14" r="3.700" fill="#f29a1c" stroke="none" />
        </svg>
        <svg width="17" height="16" viewBox="0 0 17 16" fill="none" stroke="#fff" strokeWidth="1.200" className="ml-[6px] shrink-0">
          <path d="M6 3.500h10v8H3V7M9.500 11.500V15M5.500 15h8M1 1.500h4V6H1zM3 6v3" />
        </svg>
        <svg width="18" height="16" viewBox="0 0 18 16" className="ml-[7px] mt-[3px] shrink-0">
          <path d="M1 4.500h2.500L8 .8v12L3.500 9.500H1z" fill="none" stroke="#fff" strokeWidth="1.200" />
          <circle cx="12.500" cy="10.500" r="4.800" fill="#d42a30" />
          <path d="M10.500 8.500l4 4M14.500 8.500l-4 4" stroke="#fff" strokeWidth="1.200" />
        </svg>
        <Cap className="ml-[8px] w-[24px] text-[12.5px]">ENG</Cap>
        <div className="ml-[12px] flex w-[60px] shrink-0 flex-col items-center gap-[4px] text-[12.5px]">
          <Cap className="w-[27px]">12:11</Cap>
          <Cap className="w-[59px]">22/02/2025</Cap>
        </div>
        <svg width="26" height="26" viewBox="0 0 26 26" className="ml-[16px] mt-[2px] shrink-0">
          <path d="M1 2h16v12.500H9L5.500 18v-3.500H1z" fill="#fff" />
          <path d="M4 5.500h10M4 8.300h10M4 11.100h6" stroke="#2a201c" strokeWidth="1.200" />
          <circle cx="16.500" cy="17" r="7.500" fill="#3b3735" stroke="#8a8684" />
          <text x="16.500" y="21.500" textAnchor="middle" fontSize="12.500" fontWeight="600" fill="#fff">
            2
          </text>
        </svg>
        <div className="ml-auto mr-[4px] h-full w-px bg-[#6a6260]" />
      </div>
    </footer>
  );
}

export default function App() {
  return (
    <div className="relative flex h-[900px] w-[1600px] flex-col overflow-hidden bg-white">
      <TopBars />
      <main
        className={clsx(
          "flex flex-1 flex-col justify-end border-b-2 border-l border-r-2 border-t border-b-[#e6e6e6] border-l-[#a0a0a0] border-r-[#e6e6e6] border-t-[#a0a0a0] bg-[#ffffe1] pb-[23px] text-[14.5px] font-bold shadow-[inset_1px_1px_0_#696969]",
          SANS,
        )}
      >
        <div className="flex pl-[462px] text-[#b8400e]">
          <Cap className="w-[86px]">User Name :</Cap>
          <Cap className="ml-[6px] w-[44px] text-[#0000a8]">Admin</Cap>
          <Cap className="ml-[180px] w-[84px]">Login Date :</Cap>
          <Cap className="ml-[9px] w-[75px] text-[#0000a8]">22/02/2025</Cap>
          <Cap className="ml-[21px] w-[42px]">Time :</Cap>
          <Cap className="ml-[22px] w-[73px] text-[#0000a8]">12:11:03 PM</Cap>
        </div>
      </main>
      <Taskbar />
      <PatientWindow />
      <div className={clsx("pointer-events-none absolute left-[1295px] top-[776px] flex flex-col text-[#8c9298]/60", SEGOE)}>
        <Cap className="h-[22px] w-[157px] text-[19px] leading-[22px]">Activate Windows</Cap>
        <Cap className="mt-[3px] h-[18px] w-[236px] text-[14.5px] leading-[18px]">Go to Settings to activate Windows.</Cap>
      </div>
    </div>
  );
}
